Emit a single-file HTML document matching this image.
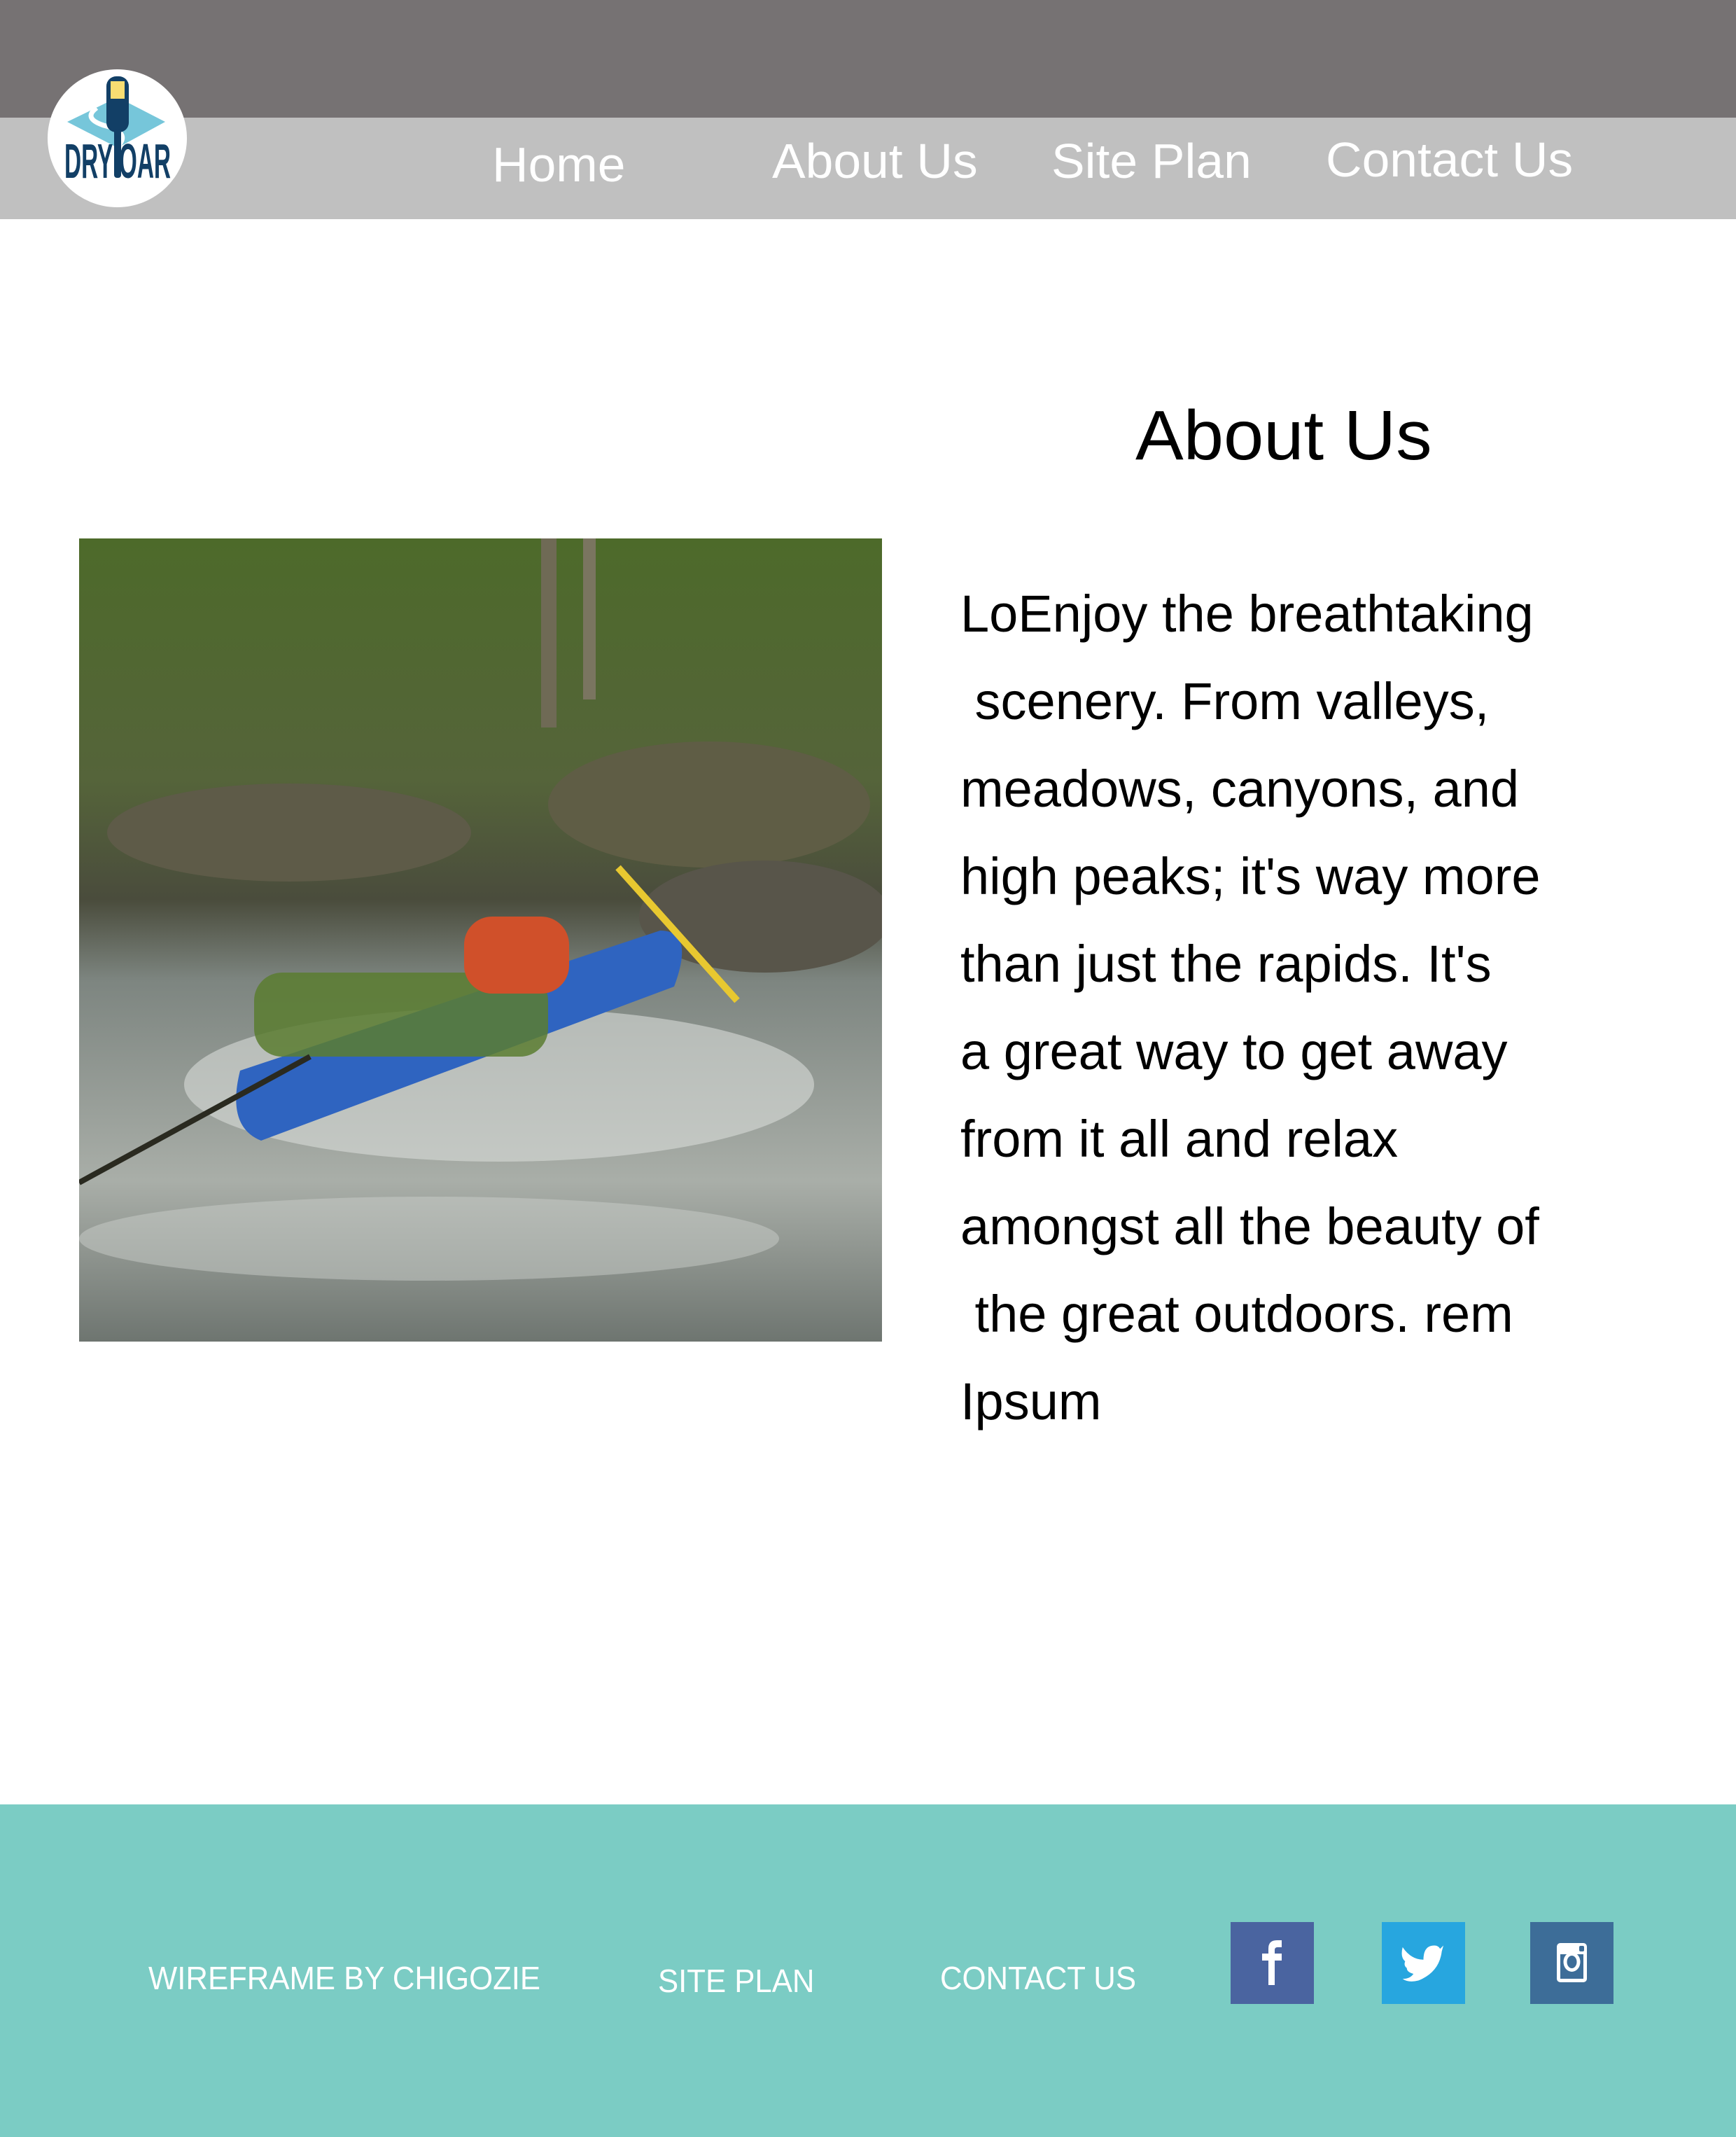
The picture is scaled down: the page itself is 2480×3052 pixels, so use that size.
<!DOCTYPE html>
<html><head><meta charset="utf-8"><style>
*{margin:0;padding:0;box-sizing:border-box}
body{width:2480px;height:3052px;position:relative;background:#fff;font-family:"Liberation Sans",sans-serif;overflow:hidden}
.a{position:absolute}
.nav{color:#fff;font-size:70px;top:190px;white-space:nowrap;transform:scaleX(1.02);transform-origin:left}
.p{position:absolute;left:1372px;font-size:74px;line-height:125px;color:#000;white-space:nowrap;transform:scaleX(1.0);transform-origin:left}
.f{position:absolute;color:#fff;font-size:46px;top:2798px;white-space:nowrap;transform:scaleX(.95);transform-origin:left}
</style></head><body>
<div class="a" style="left:0;top:0;width:2480px;height:168px;background:#767273"></div>
<div class="a" style="left:0;top:168px;width:2480px;height:145px;background:#c0c0c0"></div>
<div class="a" style="left:68px;top:99px;width:199px;height:197px;border-radius:50%;background:#fff"></div>
<svg class="a" style="left:68px;top:99px" width="199" height="197" viewBox="0 0 199 197">
<polygon points="28,75 100,40 168,75 100,112" fill="#76c6da"/>
<path d="M70,55 q-20,15 10,25 q40,10 20,30" stroke="#fff" stroke-width="7" fill="none"/>
<rect x="84" y="10" width="32" height="80" rx="14" fill="#123f66"/>
<rect x="90" y="17" width="20" height="25" fill="#f8dd72"/>
<rect x="95" y="85" width="10" height="70" rx="4" fill="#123f66"/>
<text x="24" y="155" font-family="Liberation Sans" font-size="70" font-weight="bold" fill="#123f66" textLength="152" lengthAdjust="spacingAndGlyphs">DRY OAR</text>
</svg>
<div class="a nav" style="left:703px;top:195px">Home</div>
<div class="a nav" style="left:1103px">About Us</div>
<div class="a nav" style="left:1502px">Site Plan</div>
<div class="a nav" style="left:1894px;top:188px">Contact Us</div>
<div class="a" style="left:1622px;top:565px;font-size:100px;color:#000;transform:scaleX(1.03);transform-origin:left">About Us</div>
<svg class="a" style="left:113px;top:769px" width="1147" height="1147" viewBox="0 0 1147 1147">
<defs><linearGradient id="g" x1="0" y1="0" x2="0" y2="1"><stop offset="0" stop-color="#4d6a2a"/><stop offset=".3" stop-color="#55643a"/><stop offset=".45" stop-color="#4a4c3c"/><stop offset=".55" stop-color="#7d8580"/><stop offset=".8" stop-color="#a9aea8"/><stop offset="1" stop-color="#6e7570"/></linearGradient></defs>
<rect width="1147" height="1147" fill="url(#g)"/>
<rect x="660" y="0" width="22" height="270" fill="#6f6a55"/><rect x="720" y="0" width="18" height="230" fill="#7a7560"/>
<ellipse cx="300" cy="420" rx="260" ry="70" fill="#5e5b48"/>
<ellipse cx="900" cy="380" rx="230" ry="90" fill="#5f5d45"/>
<ellipse cx="980" cy="540" rx="180" ry="80" fill="#58554a"/>
<ellipse cx="600" cy="780" rx="450" ry="110" fill="#d8dcd8" opacity=".6"/>
<ellipse cx="500" cy="1000" rx="500" ry="60" fill="#c9cdc9" opacity=".5"/>
<path d="M230,760 L830,560 Q880,560 850,640 L260,860 Q210,840 230,760Z" fill="#2f64c0"/>
<rect x="250" y="620" width="420" height="120" rx="40" fill="#5b7c30" opacity=".85"/>
<rect x="550" y="540" width="150" height="110" rx="40" fill="#d0502a"/>
<path d="M0,920 L330,740" stroke="#2a2a20" stroke-width="8"/>
<path d="M770,470 L940,660" stroke="#e8c830" stroke-width="10"/>
</svg>
<div class="p" style="top:814px">LoEnjoy the breathtaking</div>
<div class="p" style="top:939px">&nbsp;scenery. From valleys,</div>
<div class="p" style="top:1064px">meadows, canyons, and</div>
<div class="p" style="top:1189px">high peaks; it's way more</div>
<div class="p" style="top:1314px">than just the rapids. It's</div>
<div class="p" style="top:1439px">a great way to get away</div>
<div class="p" style="top:1564px">from it all and relax</div>
<div class="p" style="top:1689px">amongst all the beauty of</div>
<div class="p" style="top:1814px">&nbsp;the great outdoors. rem</div>
<div class="p" style="top:1939px">Ipsum</div>
<div class="a" style="left:0;top:2577px;width:2480px;height:475px;background:#7bccc4"></div>
<div class="f" style="left:212px">WIREFRAME BY CHIGOZIE</div>
<div class="f" style="left:940px;top:2802px">SITE PLAN</div>
<div class="f" style="left:1343px">CONTACT US</div>
<div class="a" style="left:1758px;top:2745px;width:119px;height:117px;background:#4a64a0"></div>
<svg class="a" style="left:1758px;top:2745px" width="119" height="117" viewBox="0 0 119 117"><path d="M54,90 V55 H45 V45 H54 V38 Q54,26 66,26 H73 V36 H67 Q63,36 63,40 V45 H73 V55 H63 V90Z" fill="#fff"/></svg>
<div class="a" style="left:1974px;top:2745px;width:119px;height:117px;background:#27a6df"></div>
<svg class="a" style="left:1974px;top:2745px" width="119" height="117" viewBox="0 0 100 98"><path d="M25,30 Q35,45 50,45 Q50,28 63,28 Q68,28 70,32 L74,28 L72,35 Q69,60 44,70 Q32,73 25,68 Q34,68 38,62 Q30,60 30,55 Q26,52 28,47 Q22,42 25,30Z" fill="#fff"/></svg>
<div class="a" style="left:2186px;top:2745px;width:119px;height:117px;background:#3d6d98"></div>
<svg class="a" style="left:2186px;top:2745px" width="119" height="117" viewBox="0 0 119 117"><rect x="38" y="30" width="43" height="56" rx="5" fill="#fff"/><rect x="43" y="46" width="33" height="35" fill="#3d6d98"/><ellipse cx="59.5" cy="57" rx="12" ry="14" fill="#fff"/><ellipse cx="59.5" cy="57" rx="7" ry="9" fill="#3d6d98"/><rect x="70" y="34" width="7" height="8" rx="2" fill="#3d6d98"/></svg>
</body></html>
